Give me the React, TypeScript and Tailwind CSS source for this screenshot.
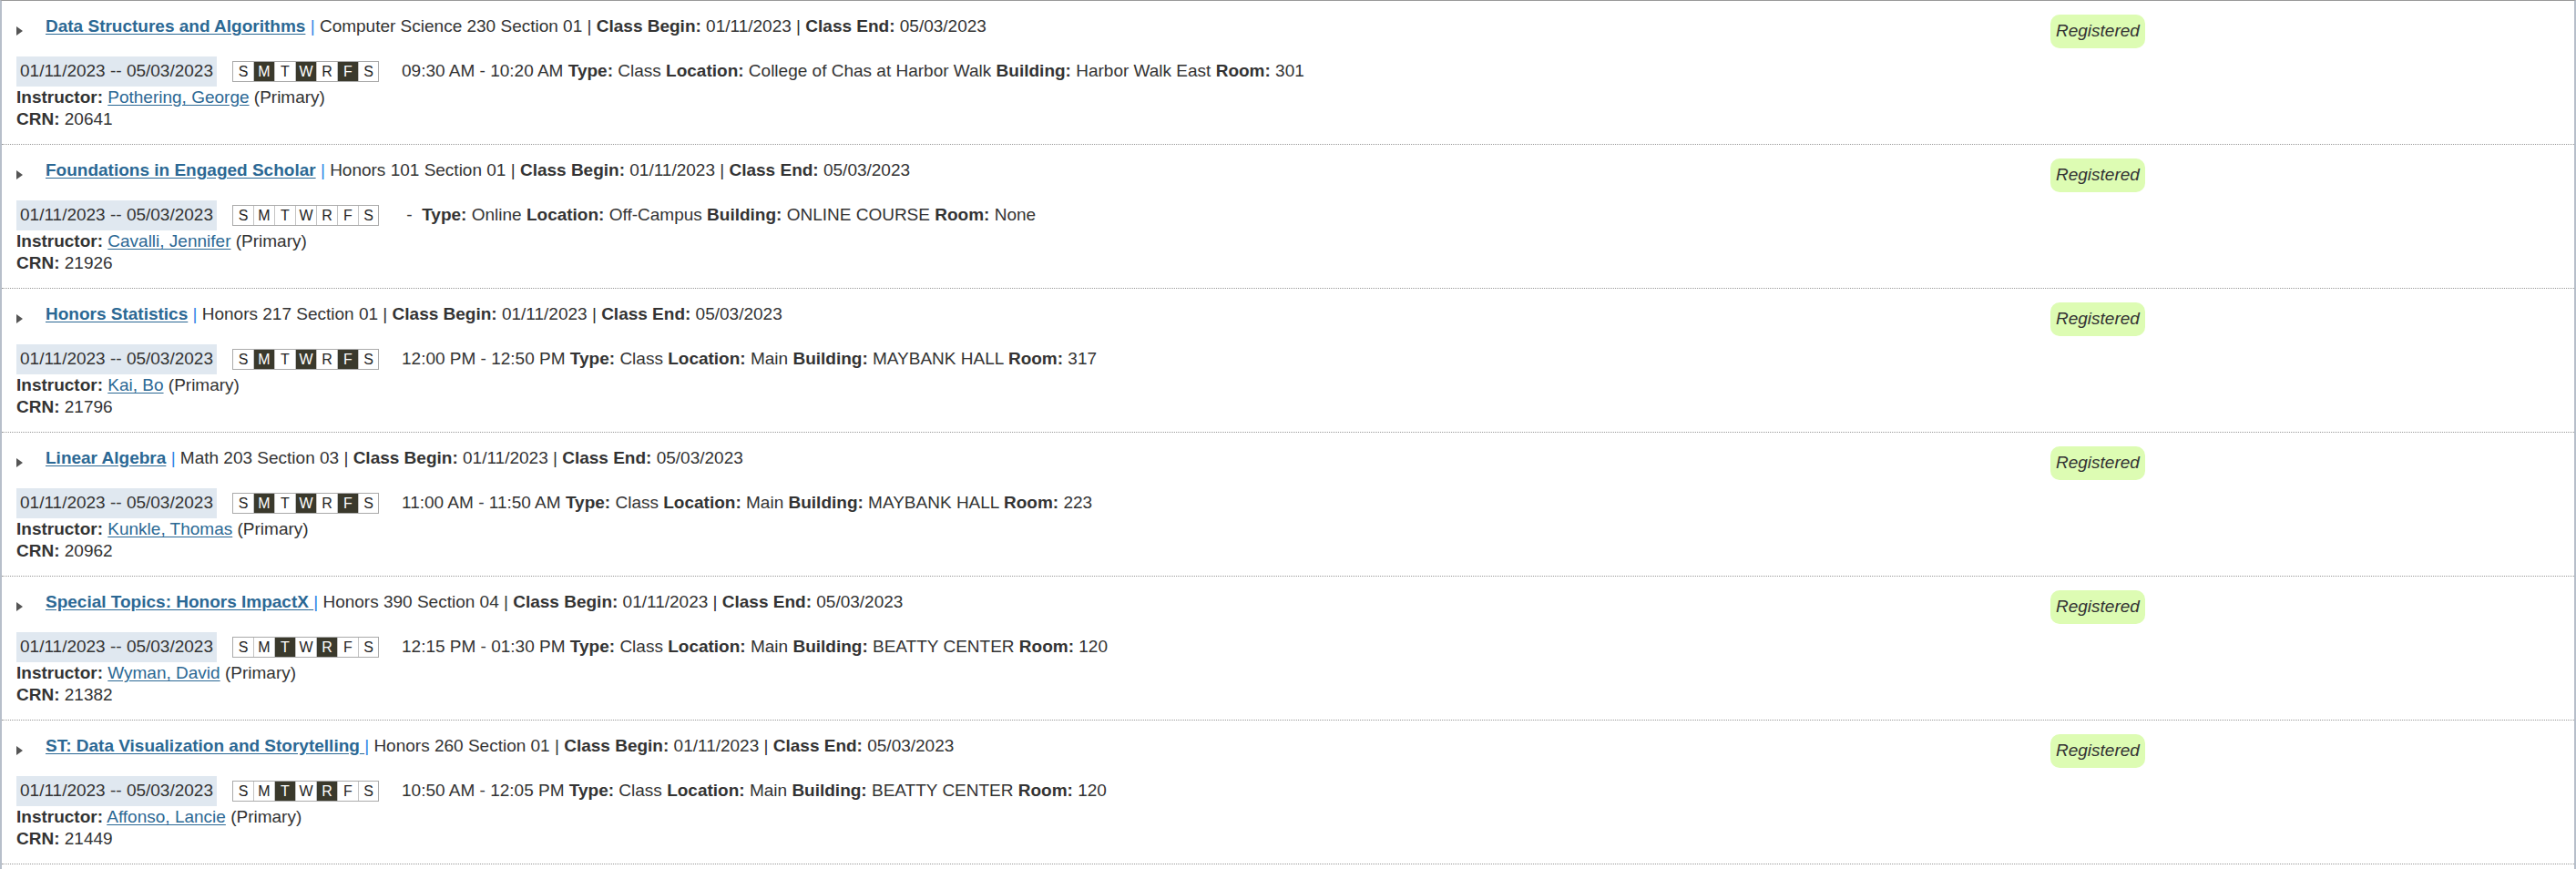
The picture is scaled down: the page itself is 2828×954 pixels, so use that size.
import React from "react";

type Course = {
  title: string;
  trailingSpace?: boolean;
  subject: string;
  time: string;
  type: string;
  location: string;
  building: string;
  room: string;
  instructor: string;
  crn: string;
  days: boolean[];
};

const MWF = [false, true, false, true, false, true, false];
const TR = [false, false, true, false, true, false, false];
const NONE = [false, false, false, false, false, false, false];

const courses: Course[] = [
  {
    title: "Data Structures and Algorithms",
    subject: "Computer Science 230 Section 01",
    time: "09:30 AM - 10:20 AM",
    type: "Class",
    location: "College of Chas at Harbor Walk",
    building: "Harbor Walk East",
    room: "301",
    instructor: "Pothering, George",
    crn: "20641",
    days: MWF,
  },
  {
    title: "Foundations in Engaged Scholar",
    subject: "Honors 101 Section 01",
    time: "",
    type: "Online",
    location: "Off-Campus",
    building: "ONLINE COURSE",
    room: "None",
    instructor: "Cavalli, Jennifer",
    crn: "21926",
    days: NONE,
  },
  {
    title: "Honors Statistics",
    subject: "Honors 217 Section 01",
    time: "12:00 PM - 12:50 PM",
    type: "Class",
    location: "Main",
    building: "MAYBANK HALL",
    room: "317",
    instructor: "Kai, Bo",
    crn: "21796",
    days: MWF,
  },
  {
    title: "Linear Algebra",
    subject: "Math 203 Section 03",
    time: "11:00 AM - 11:50 AM",
    type: "Class",
    location: "Main",
    building: "MAYBANK HALL",
    room: "223",
    instructor: "Kunkle, Thomas",
    crn: "20962",
    days: MWF,
  },
  {
    title: "Special Topics: Honors ImpactX",
    trailingSpace: true,
    subject: "Honors 390 Section 04",
    time: "12:15 PM - 01:30 PM",
    type: "Class",
    location: "Main",
    building: "BEATTY CENTER",
    room: "120",
    instructor: "Wyman, David",
    crn: "21382",
    days: TR,
  },
  {
    title: "ST: Data Visualization and Storytelling",
    trailingSpace: true,
    subject: "Honors 260 Section 01",
    time: "10:50 AM - 12:05 PM",
    type: "Class",
    location: "Main",
    building: "BEATTY CENTER",
    room: "120",
    instructor: "Affonso, Lancie",
    crn: "21449",
    days: TR,
  },
];

const LETTERS = ["S", "M", "T", "W", "R", "F", "S"];

function Days({ days }: { days: boolean[] }) {
  return (
    <div className="flex border border-[#aaaaaa] bg-white">
      {days.map((on, i) => (
        <div
          key={i}
          className={
            (on ? "bg-[#3a392c] text-white " : "bg-white text-[#222] ") +
            (i < 6 ? "border-r border-[#c4c4c4] w-[23px] " : "w-[21px] ") +
            "h-[21px] flex items-center justify-center text-[16px] leading-none"
          }
        >
          {LETTERS[i]}
        </div>
      ))}
    </div>
  );
}

function Row({ c }: { c: Course }) {
  return (
    <div className="flex border-b border-dotted border-[#999999]">
      <div className="flex-1 pl-4 pt-[17px] pb-[16px]">
        <div className="flex items-start h-[22px]">
          <svg width="7" height="10" viewBox="0 0 7 10" className="mt-[11px] shrink-0">
            <path d="M0 0 L7 5 L0 10 Z" fill="#555555" />
          </svg>
          <div className="ml-[25px] leading-[22px] whitespace-nowrap">
            <a className="font-bold text-[#2b6894] underline underline-offset-[2px] cursor-pointer">
              {c.title}
              {c.trailingSpace ? " " : ""}
            </a>
            {c.trailingSpace ? "" : " "}
            <span className="text-[#2f86e6]">|</span> {c.subject} | <b>Class Begin:</b> 01/11/2023 |{" "}
            <b>Class End:</b> 05/03/2023
          </div>
        </div>
        <div className="mt-[22px] flex items-center h-[33px] whitespace-nowrap">
          <div className="bg-[#e0e8f0] h-[33px] px-[4px] flex items-center">01/11/2023 -- 05/03/2023</div>
          <div className="ml-[17px]">
            <Days days={c.days} />
          </div>
          <div className="ml-[25px]">
            {c.time ? c.time : "\u00a0-\u00a0"} <b>Type:</b> {c.type} <b>Location:</b> {c.location}{" "}
            <b>Building:</b> {c.building} <b>Room:</b> {c.room}
          </div>
        </div>
        <div className="leading-[23.5px] whitespace-nowrap">
          <b>Instructor:</b>{" "}
          <a className="text-[#2b6894] underline underline-offset-[2px] cursor-pointer">{c.instructor}</a> (Primary)
        </div>
        <div className="leading-[23.5px] whitespace-nowrap">
          <b>CRN:</b> {c.crn}
        </div>
      </div>
      <div className="w-[575px] shrink-0 pt-[15px]">
        <span className="inline-flex items-center h-[37px] px-[6px] rounded-[10px] bg-[#ddfcb3] italic text-[#333]">
          Registered
        </span>
      </div>
    </div>
  );
}

export default function App() {
  return (
    <div
      className="w-[2828px] min-h-[954px] bg-white text-[19px] text-[#333333]"
      style={{ fontFamily: '"Liberation Sans", Arial, Helvetica, sans-serif' }}
    >
      <div className="border-t border-[#999999] border-l-2 border-r-2 border-l-[#b7bfca] border-r-[#b7bfca] min-h-[954px]">
        {courses.map((c, i) => (
          <Row key={i} c={c} />
        ))}
      </div>
    </div>
  );
}
